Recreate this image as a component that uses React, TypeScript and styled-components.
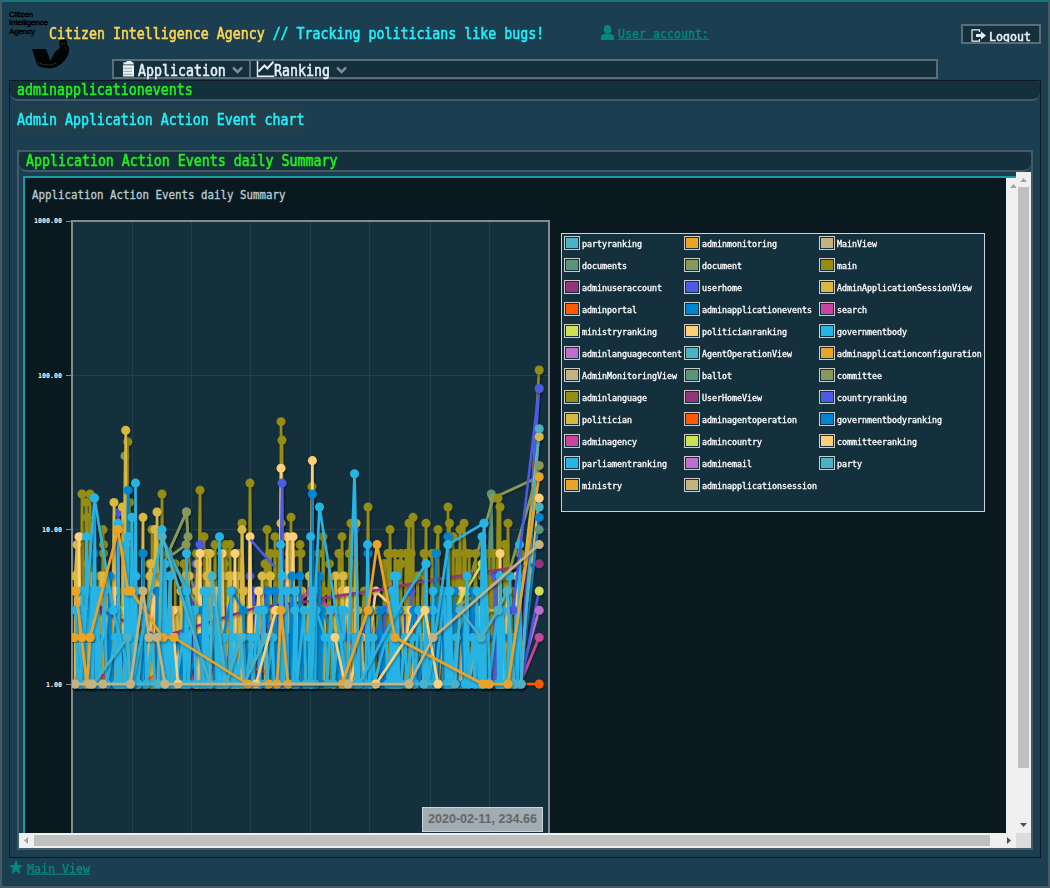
import React from "react";
import styled, { createGlobalStyle } from "styled-components";

const c = {
  page: "#1b3f51",
  panel: "#14303d",
  dark: "#0a191f",
  frame: "#455a64",
  button: "#5b6e78",
  teal: "#1b9a9f",
  link: "#06887c",
  green: "#24f01c",
  cyan: "#25eefa",
  yellow: "#ffd553",
};

const mono = `"DejaVu Sans Mono", "Liberation Mono", monospace`;

const GlobalStyle = createGlobalStyle`
  * { box-sizing: border-box; }
  body { margin: 0; overflow: hidden; background: ${c.page}; }
`;

/* Condensed monospace text whose glyphs are each $cell pixels wide. */
const Mono = styled.span<{ $cell: number }>`
  display: inline-block;
  font-family: ${mono};
  font-size: ${(p) => p.$cell / 0.602}px;
  line-height: 18px;
  white-space: pre;
  transform: scaleY(1.13);
  -webkit-text-stroke: 0.5px currentColor;
`;

const Page = styled.div`
  width: 1050px;
  height: 888px;
  padding: 0 7px;
  display: flex;
  flex-direction: column;
  background: ${c.page};
  border: 2px solid ${c.frame};
  border-top-color: #1a7478;
  overflow: hidden;
`;

const Header = styled.header`
  height: 57px;
  flex: none;
  display: flex;
  align-items: flex-start;
`;

const LogoBox = styled.div`
  width: 40px;
  flex: none;
  padding-top: 7px;
  svg { display: block; overflow: visible; }
`;

const Title = styled(Mono)`
  width: 552px;
  line-height: 20px;
  margin-top: 22px;
  color: ${c.cyan};
  em { font-style: normal; color: ${c.yellow}; }
`;

const LinkRow = styled.a`
  display: flex;
  align-items: flex-start;
  gap: 4px;
  color: ${c.link};
  svg { display: block; flex: none; }
`;

const LinkText = styled(Mono)`
  line-height: 16px;
  text-decoration: underline;
  text-underline-offset: 1px;
  -webkit-text-stroke-width: 0.35px;
`;

const AccountLink = styled(LinkRow)`
  margin-top: 23px;
`;

const LogoutButton = styled.button`
  width: 80px;
  height: 20px;
  margin: 22px 0 0 auto;
  padding: 0 0 0 8px;
  display: flex;
  align-items: flex-start;
  gap: 3px;
  border: 2px solid ${c.button};
  background: ${c.panel};
  color: #e8f2f5;
  overflow: hidden;
  svg { display: block; flex: none; margin-top: 3px; }
`;

const LogoutText = styled(Mono)`
  line-height: 16px;
  margin-top: 2px;
`;

const MenuBar = styled.nav`
  width: 826px;
  height: 20px;
  flex: none;
  margin-left: 103px;
  display: flex;
  border: 2px solid ${c.button};
  background: ${c.panel};
`;

const MenuItem = styled.div<{ $width: number; $divider?: boolean }>`
  width: ${(p) => p.$width}px;
  height: 16px;
  display: flex;
  align-items: center;
  color: #e6eff3;
  border-right: ${(p) => (p.$divider ? `2px solid ${c.button}` : "none")};
  svg { display: block; flex: none; }
`;

const MenuIconSlot = styled.span<{ $tight?: boolean }>`
  padding: ${(p) => (p.$tight ? "0 0 0 5px" : "0 3px 0 8px")};
`;

const MenuText = styled(Mono)`
  margin: 3px 6px 0 0;
`;

const Content = styled.main`
  width: 1032px;
  height: 778px;
  flex: none;
  margin-top: 1px;
  border: 1px solid ${c.dark};
`;

const Caption = styled.div`
  height: 20px;
  padding: 0 0 1px 7px;
  display: flex;
  align-items: center;
  background: ${c.panel};
  border-bottom: 2px solid ${c.frame};
  border-radius: 4px 4px 8px 8px;
  color: ${c.green};
`;

const Subtitle = styled.div`
  width: 288px;
  height: 24px;
  margin: 7px 0 18px 7px;
  padding-bottom: 1px;
  display: flex;
  align-items: center;
  background: #223f49;
  border-radius: 4px;
  color: ${c.cyan};
`;

const Panel = styled.section`
  width: 1016px;
  height: 700px;
  margin-left: 7px;
  border: 2px solid ${c.frame};
`;

const Scroller = styled.div`
  height: 676px;
  display: grid;
  grid-template-columns: 997px 15px;
  grid-template-rows: 661px 15px;
`;

const Viewport = styled.div`
  padding: 4px 0 0 4px;
  overflow: hidden;
`;

const ChartFrame = styled.div`
  height: 657px;
  display: flex;
  border: solid ${c.teal};
  border-width: 2px 0 0 2px;
  background: ${c.dark};
`;

const PlotArea = styled.div`
  width: 536px;
  flex: none;
  position: relative;
  svg { display: block; }
`;

const DateBadge = styled.div`
  position: absolute;
  left: 397px;
  top: 629px;
  width: 121px;
  height: 25px;
  border: 1px solid #cfd4d6;
  background: #a1acb3;
  color: #666;
  font: bold 12.6px/22px "Liberation Sans", Arial, sans-serif;
  text-align: center;
  white-space: nowrap;
`;

const Legend = styled.div`
  width: 424px;
  height: 279px;
  margin-top: 55px;
  padding: 2px 0 0 2px;
  display: grid;
  grid-template-columns: 120px 135px 160px;
  grid-auto-rows: 22px;
  border: 1px solid #ccd2d4;
  background: ${c.panel};
`;

const LegendItem = styled.div`
  display: flex;
  align-items: flex-start;
  gap: 2px;
  color: #fff;
`;

const Swatch = styled.i<{ $color: string }>`
  width: 16px;
  height: 14px;
  flex: none;
  padding: 1px;
  border: 1px solid #ccc;
  background: ${(p) => p.$color};
  background-clip: content-box;
`;

const LegendText = styled(Mono)`
  line-height: 14px;
  margin-top: 1px;
  -webkit-text-stroke-width: 0.3px;
`;

const InnerTrack = styled.div`
  width: 10px;
  margin-left: auto;
  padding: 6px 0 0 4px;
  background: #f0f0f0;
  overflow: hidden;
  svg { display: block; }
`;

const VTrack = styled.div`
  display: flex;
  flex-direction: column;
  align-items: center;
  justify-content: space-between;
  background: #f0f0f0;
  svg { display: block; flex: none; }
`;

const VThumb = styled.div`
  width: 11px;
  height: 581px;
  flex: none;
  margin-bottom: auto;
  background: #c0c0c0;
`;

const HTrack = styled.div`
  display: flex;
  align-items: center;
  background: #f0f0f0;
  svg { display: block; flex: none; }
`;

const HThumb = styled.div`
  width: 956px;
  height: 11px;
  margin-right: auto;
  background: #c0c0c0;
`;

const Corner = styled.div`
  background: #dcdcdc;
`;

const Footer = styled(LinkRow)`
  margin-top: 2px;
  height: 16px;
`;

/* ---------- chart data ---------- */

type Pt = [number, number];

const palette = {
  partyTeal: "#4bb1c5",
  orange: "#eba328",
  tan: "#c6b27f",
  fern: "#5b9478",
  moss: "#869958",
  olive: "#958c12",
  plum: "#953579",
  indigo: "#4c5be3",
  gold: "#d8b83f",
  red: "#ff5800",
  blue: "#0086d1",
  pink: "#c9449f",
  lime: "#cddf53",
  cream: "#fcd078",
  sky: "#26b4e4",
  orchid: "#bd6ec8",
};

const yOf = (v: number) => 684 - 154.4 * Math.log10(v);

function random(seed: number) {
  let s = seed;
  return () => {
    s = (s * 1664525 + 1013904223) % 4294967296;
    return s / 4294967296;
  };
}

/* Daily counts: a run of low values with the named peaks merged in. */
function daily(seed: number, count: number, levels: number[], peaks: Pt[], from = 74, to = 522): Pt[] {
  const r = random(seed);
  const pts: Pt[] = [];
  for (let i = 0; i < count; i++) {
    const x = from + ((to - from) * (i + r() * 0.9)) / count;
    pts.push([x, levels[Math.floor(r() * levels.length)]]);
    if (r() < 0.85) pts.push([x + 1 + r() * 2.5, 1]);
  }
  for (const [x, v] of peaks) {
    pts.push([x - 1.8, 1], [x, v], [x + 1.8, 1]);
  }
  return pts.sort((a, b) => a[0] - b[0]);
}

const olivePeaks: Pt[] = [
  [82, 17], [90, 17], [86, 15], [87, 12], [103, 10], [103.5, 8], [127.7, 37], [129.5, 15], [162, 17], [152, 10],
  [200, 18], [204, 9], [215, 8], [225, 8], [230, 8], [242, 11], [250, 20], [267, 10], [275, 9], [281, 50], [282, 38],
  [291, 12], [300, 8], [301, 7], [265, 6], [342, 9], [339, 7], [337, 5], [312, 19], [351, 11], [368, 14], [390, 10],
  [388, 7], [395, 7], [401, 7], [406, 7], [409, 11], [413, 12], [426, 11], [438, 10], [448, 14], [449.5, 11],
  [453, 9], [464, 11], [460, 10], [432, 7], [498, 16], [500, 14], [508, 11], [505, 8], [385, 6], [400, 6], [489, 7], [494, 7],
  [323, 9], [324, 4],
];
const goldPeaks: Pt[] = [
  [77, 8], [114, 15], [125.7, 44], [122.5, 14], [143, 12], [157, 13], [155, 10], [151, 6], [96, 4], [101, 5],
  [186, 5], [198, 6], [207, 7], [210, 7], [242, 10], [270, 5], [281, 11], [290, 8], [356, 11], [342, 4],
];
const creamPeaks: Pt[] = [
  [79, 9], [200, 7], [222, 7], [235, 7], [250, 9], [281, 25], [287, 9], [293, 9], [312.4, 28], [335, 2], [425, 3],
  [461, 4], [500, 7], [517, 5], [275, 3],
];
const indigoPeaks: Pt[] = [
  [118, 13], [192, 4], [196, 6], [200, 8], [250, 5], [253, 4], [254.5, 3], [265, 4], [355, 10],
  [411, 4], [417, 3], [495, 5], [244, 3],
];
const bluePeaks: Pt[] = [
  [94, 7], [110, 5], [128, 18], [143, 7], [157, 4], [312.4, 17], [319.5, 5], [292, 5], [300, 5], [275, 4],
  [340, 3], [448, 9], [436, 7], [368, 7],
];
const skyPeaks: Pt[] = [
  [94.5, 16], [86.5, 9], [82, 4], [91, 4], [118, 11], [128, 9], [126, 8], [135.5, 20], [132, 12], [135, 4], [136, 5], [162, 10],
  [165, 6], [170, 5], [186.5, 7], [219.5, 9], [204, 4], [231, 4], [280.5, 8], [282, 5], [295, 4], [310.6, 9],
  [313, 4], [367.5, 8], [394, 5], [397, 5], [426, 6], [448, 8], [467, 5], [482, 9], [484, 11], [519.5, 8],
  [500, 5], [510, 5], [392, 4], [433, 4], [477, 4],
];

interface Series { color: string; points: Pt[] }

const series: Series[] = [
  { color: palette.fern, points: [...daily(3, 10, [2, 3], []), [428, 1], [449, 3], [488, 4], [491.3, 17], [494, 1]] },
  { color: palette.moss, points: [[74, 2], [122, 1], [125, 30], [137, 3], [168, 7], [186.5, 13], [190, 5], [210, 2], [320, 3], [360, 2], [440, 1], [493, 16], [539, 22]] },
  { color: palette.olive, points: [...daily(12, 80, [3, 4, 5, 6, 7, 7], olivePeaks), [539, 108]] },
  { color: palette.indigo, points: [...daily(47, 35, [2, 3, 3], indigoPeaks), [539, 82]] },
  { color: palette.gold, points: [...daily(61, 56, [2, 3, 4, 5, 5], goldPeaks, 74, 365), ...daily(69, 12, [2, 3], [], 370, 520), [539, 40]] },
  { color: palette.red, points: [[75, 1], [87, 2], [101, 1], [126, 2], [140, 1], [170, 1.3], [182, 1.3], [230, 1.4], [285, 1.1], [330, 1], [539, 1]] },
  { color: palette.pink, points: [[85, 1], [180, 2], [194, 1], [311, 4], [337, 2.8], [370, 1], [520, 1], [539, 2]] },
  { color: palette.cream, points: [...daily(91, 30, [2, 3, 4], creamPeaks), [539, 16]] },
  { color: palette.plum, points: [[82, 3], [101, 3], [160, 2], [255, 3.1], [305, 3.4], [323, 3.6], [382, 4.1], [430, 4.7], [539, 6]] },
  { color: palette.lime, points: [[394, 3], [409, 1], [482, 6], [485, 1], [521, 1]] },
  { color: palette.orchid, points: [[518, 1], [539, 3]] },
  { color: palette.moss, points: [[160, 5], [168, 7], [186.5, 13], [188, 9], [186, 8], [170, 6.7], [200, 3]] },
  { color: palette.moss, points: [[390, 1], [450, 3], [508, 5], [539, 25]] },
  { color: palette.blue, points: [...daily(15, 42, [2, 2, 3, 4], bluePeaks), [539, 12]] },
  { color: palette.indigo, points: [[279, 1], [282, 20], [284, 1]] },
  { color: palette.indigo, points: [[250.5, 8.6], [275, 5.7]] },
  { color: palette.sky, points: daily(27, 60, [2, 2, 2, 3, 3, 4], skyPeaks) },
  { color: palette.sky, points: [[80, 1], [94.5, 16], [113, 3], [132, 1], [162, 9], [186.5, 4], [205, 1]] },
  { color: palette.sky, points: [[311, 1], [319.5, 14], [340, 2], [347, 1], [354.5, 23], [359, 1], [405, 3.7], [426, 6], [428, 1], [448, 8], [484, 11], [490, 1]] },
  { color: palette.indigo, points: [[521, 1], [539, 4]] },
  { color: palette.indigo, points: [[513, 3], [539, 82]] },
  { color: palette.partyTeal, points: [[93, 1], [127.5, 2], [130, 1], [158, 1], [162, 9], [210, 1], [212, 5], [226, 1], [241, 2], [244, 1], [266, 2], [268, 1], [424, 1], [455, 1], [460, 3], [481, 2], [498, 3], [507, 4], [514, 1], [521, 1], [539, 45]] },
  { color: palette.cream, points: [[174, 2], [178, 1]] },
  { color: palette.cream, points: [[256, 1], [276, 3]] },
  { color: palette.cream, points: [[335, 2], [345, 1]] },
  { color: palette.cream, points: [[376, 1], [425, 3], [438, 1]] },
  { color: palette.orange, points: [[74, 4], [76, 4], [87, 1], [90, 2], [118, 10], [128, 4], [131, 4], [163, 2], [174, 2], [248, 1], [269, 1], [277, 1], [281, 3], [288, 1], [342, 1], [368, 3], [377, 8], [395, 2], [483, 1], [489, 1], [508, 1], [539, 22]] },
  { color: palette.orange, points: [[74, 2], [82, 2], [90, 2]] },
  { color: palette.tan, points: [[75, 1], [90, 1], [92, 1], [103, 1], [130.5, 1], [143, 4], [149, 2], [157, 2], [165, 1], [348, 1], [409, 1], [433, 2], [539, 8]] },
];

const endMarks: [string, number][] = [
  [palette.gold, 40], [palette.moss, 26], [palette.cream, 16], [palette.partyTeal, 14], [palette.blue, 12],
  [palette.fern, 10], [palette.olive, 108], [palette.indigo, 82], [palette.partyTeal, 45], [palette.orange, 22],
  [palette.tan, 8], [palette.plum, 6], [palette.lime, 4], [palette.orchid, 3], [palette.pink, 2], [palette.red, 1],
];

/* Line bends that carry no marker of their own. */
const hasMarker = ([x, v]: Pt) => x < 530 && Number.isInteger(v);

const gridX = [132.5, 191.5, 250.5, 310.5, 369.5, 430.5, 489.5];
const gridY: [number, string][] = [[221, "1000.00"], [375.5, "100.00"], [529.5, "10.00"], [684.5, "1.00"]];

function Plot() {
  return (
    <svg width="536" height="655" viewBox="25 178 536 655">
      <defs>
        <filter id="soft" x="-5%" y="-5%" width="110%" height="110%">
          <feDropShadow dx="1" dy="1.5" stdDeviation="1" floodColor="#000" floodOpacity="0.35" />
        </filter>
        <clipPath id="plot"><rect x="72" y="221" width="478" height="612" /></clipPath>
      </defs>
      <text
        transform="translate(32 199) scale(1 1.1)" fontFamily={mono} fontSize="10.8"
        fill="#b9cad3" stroke="#b9cad3" strokeWidth="0.3" textLength="253.5"
      >
        Application Action Events daily Summary
      </text>
      <rect x="72" y="221" width="477" height="640" fill={c.panel} />
      {gridX.map((x) => <path key={x} d={`M${x} 222V833`} stroke="#22404a" />)}
      {gridY.slice(1).map(([y]) => <path key={y} d={`M73 ${y}H548`} stroke="#22404a" />)}
      {gridY.map(([y, label]) => (
        <g key={label}>
          <path d={`M66 ${Math.floor(y) + 0.5}H71`} stroke="#858c91" />
          <text x="62" y={y + 2} textAnchor="end" fontFamily={mono} fontSize="6.64" fontWeight="bold" fill="#fff" textLength={label.length * 4}>
            {label}
          </text>
        </g>
      ))}
      <rect x="72" y="221" width="477" height="640" fill="none" stroke="#858c91" strokeWidth="2" />
      <g clipPath="url(#plot)">
        {series.map((s, i) => (
          <g key={i} filter={s.points.length > 2 ? "url(#soft)" : undefined}>
            <polyline
              points={s.points.map(([x, v]) => `${x.toFixed(1)},${yOf(v).toFixed(1)}`).join(" ")}
              fill="none" stroke={s.color} strokeWidth="2.6" strokeLinejoin="round"
            />
            {s.points.filter(hasMarker).map(([x, v], j) => (
              <circle key={j} cx={x} cy={yOf(v)} r="4.5" fill={s.color} />
            ))}
          </g>
        ))}
        <g filter="url(#soft)">
          {endMarks.map(([color, v], i) => <circle key={i} cx="539.2" cy={yOf(v)} r="4.5" fill={color} />)}
        </g>
      </g>
    </svg>
  );
}

const legend: [string, string][] = [
  ["partyranking", palette.partyTeal], ["adminmonitoring", palette.orange], ["MainView", palette.tan],
  ["documents", palette.fern], ["document", palette.moss], ["main", palette.olive],
  ["adminuseraccount", palette.plum], ["userhome", palette.indigo], ["AdminApplicationSessionView", palette.gold],
  ["adminportal", palette.red], ["adminapplicationevents", palette.blue], ["search", palette.pink],
  ["ministryranking", palette.lime], ["politicianranking", palette.cream], ["governmentbody", palette.sky],
  ["adminlanguagecontent", palette.orchid], ["AgentOperationView", palette.partyTeal], ["adminapplicationconfiguration", palette.orange],
  ["AdminMonitoringView", palette.tan], ["ballot", palette.fern], ["committee", palette.moss],
  ["adminlanguage", palette.olive], ["UserHomeView", palette.plum], ["countryranking", palette.indigo],
  ["politician", palette.gold], ["adminagentoperation", palette.red], ["governmentbodyranking", palette.blue],
  ["adminagency", palette.pink], ["admincountry", palette.lime], ["committeeranking", palette.cream],
  ["parliamentranking", palette.sky], ["adminemail", palette.orchid], ["party", palette.partyTeal],
  ["ministry", palette.orange], ["adminapplicationsession", palette.tan],
];

/* ---------- icons ---------- */

const Logo = () => (
  <svg width="64" height="62" viewBox="9 9 64 62">
    <g fontFamily='"Liberation Sans", Arial, sans-serif' fontSize="8" fill="#000" stroke="#000" strokeWidth=".45">
      <text x="9" y="17" textLength="24">Citizen</text>
      <text x="9" y="25.3" textLength="39">Intelligence</text>
      <text x="9" y="33.6" textLength="26">Agency</text>
    </g>
    <path d="M32 49H46L50.500 61L54 53.500C56 50 59 49.500 60 47.500L59 43C59 40 61.500 38.500 64 39C67 39.500 67.500 42 67 44.500C69 46.500 69.500 49 68.800 52C67.500 58 63 63 58 66C53 69 44 68.500 39.500 66.500C36.500 65 36 62 35.500 60Z" fill="#020303" />
    <path d="M37 62.500L43 64.500L51 65L57 63M61 43.500L65 44M65 47L67 50" stroke="#46545b" strokeWidth=".7" strokeDasharray="2 1" fill="none" />
  </svg>
);

const UserIcon = () => (
  <svg width="13" height="15" viewBox="0 0 13 15" fill="currentColor">
    <ellipse cx="6.500" cy="4.300" rx="3.700" ry="4.300" />
    <path d="M0 15V12C0 10 2 9 4.500 8.500H8.500C11 9 13 10 13 12V15Z" />
  </svg>
);

const LogoutIcon = () => (
  <svg width="15" height="13" viewBox="0 0 15 13">
    <path d="M8.500 3V.8H1V12.200H8.500V10" fill="none" stroke="currentColor" strokeWidth="1.200" />
    <path d="M5 5H10V2.500L15 6.500L10 10.500V8H5Z" fill="currentColor" />
  </svg>
);

const ServerIcon = () => (
  <svg width="13" height="16" viewBox="0 0 13 16">
    <path d="M4.500 0H9.500V1.200H11.500V3.500H1.500V1.200H4.500Z" fill="currentColor" />
    <path d="M1 4H12V15.500H1Z" fill="currentColor" />
    <path d="M1.500 4.200H12M1.500 7.300H10M1.500 10.300H10M1.500 13.300H10" stroke="#71858f" strokeWidth=".7" />
  </svg>
);

const ChartIcon = () => (
  <svg width="18" height="16" viewBox="0 0 18 16" fill="none" stroke="currentColor">
    <path d="M1.500 0V15.200H18" strokeWidth="1.500" />
    <path d="M2.500 10.500L8.500 4.500L11.300 7.500L17.500 .8" strokeWidth="2" />
  </svg>
);

const Chevron = () => (
  <svg width="11" height="10" viewBox="0 0 11 10" fill="none" stroke="#7c8e97" strokeWidth="2.500">
    <path d="M1 3.500L5.500 8L10 3.500" />
  </svg>
);

const StarIcon = () => (
  <svg width="14" height="14" viewBox="0 0 14 14" fill="currentColor">
    <path d="M7 0L9 4.900L14 5.200L10.200 8.600L11.500 14L7 11L2.500 14L3.800 8.600L0 5.200L5 4.900Z" />
  </svg>
);

const Arrow = ({ d, color = "#505050" }: { d: string; color?: string }) => (
  <svg width="15" height="15" viewBox="0 0 15 15"><path d={d} fill={color} /></svg>
);

export default function App() {
  return (
    <Page>
      <GlobalStyle />
      <Header>
        <LogoBox><Logo /></LogoBox>
        <Title $cell={8}><em>Citizen Intelligence Agency</em> // Tracking politicians like bugs!</Title>
        <AccountLink><UserIcon /><LinkText $cell={7}>User account:</LinkText></AccountLink>
        <LogoutButton><LogoutIcon /><LogoutText $cell={7}>Logout</LogoutText></LogoutButton>
      </Header>
      <MenuBar>
        <MenuItem $width={137} $divider>
          <MenuIconSlot><ServerIcon /></MenuIconSlot>
          <MenuText $cell={8}>Application</MenuText><Chevron />
        </MenuItem>
        <MenuItem $width={110}>
          <MenuIconSlot $tight><ChartIcon /></MenuIconSlot>
          <MenuText $cell={8}>Ranking</MenuText><Chevron />
        </MenuItem>
      </MenuBar>
      <Content>
        <Caption><Mono $cell={8}>adminapplicationevents</Mono></Caption>
        <Subtitle><Mono $cell={8}>Admin Application Action Event chart</Mono></Subtitle>
        <Panel>
          <Caption><Mono $cell={8}>Application Action Events daily Summary</Mono></Caption>
          <Scroller>
            <Viewport>
              <ChartFrame>
                <PlotArea>
                  <Plot />
                  <DateBadge>2020-02-11, 234.66</DateBadge>
                </PlotArea>
                <Legend>
                  {legend.map(([name, color]) => (
                    <LegendItem key={name}>
                      <Swatch $color={color} />
                      <LegendText $cell={5}>{name}</LegendText>
                    </LegendItem>
                  ))}
                </Legend>
                <InnerTrack>
                  <svg width="8" height="4" viewBox="0 0 8 4"><path d="M0 4L3.500 0L7 4Z" fill="#a3a3a3" /></svg>
                </InnerTrack>
              </ChartFrame>
            </Viewport>
            <VTrack>
              <Arrow d="M4 10L7.500 6L11 10Z" color="#a3a3a3" />
              <VThumb />
              <Arrow d="M4 5H11L7.500 9Z" />
            </VTrack>
            <HTrack>
              <Arrow d="M9 4V11L5 7.500Z" color="#a3a3a3" />
              <HThumb />
              <Arrow d="M6 4V11L10 7.500Z" />
            </HTrack>
            <Corner />
          </Scroller>
        </Panel>
      </Content>
      <Footer><StarIcon /><LinkText $cell={7}>Main View</LinkText></Footer>
    </Page>
  );
}
